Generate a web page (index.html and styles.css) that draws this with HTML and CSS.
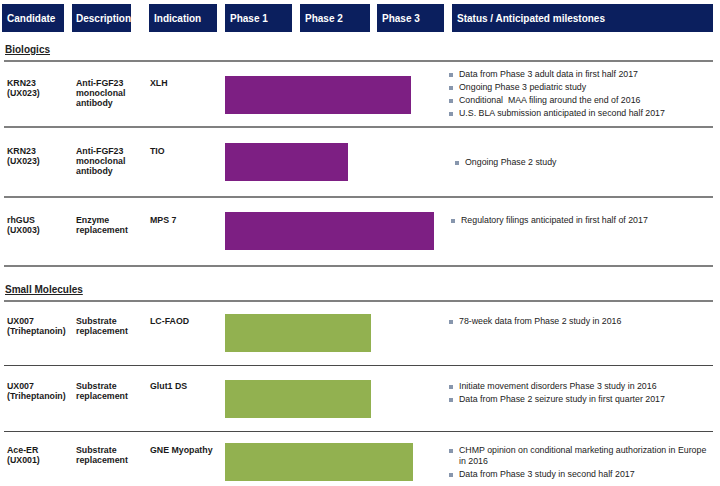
FILE: index.html
```html
<!DOCTYPE html>
<html lang="en">
<head>
<meta charset="utf-8">
<title>Pipeline</title>
<link rel="stylesheet" href="styles.css">
</head>
<body>
<div class="page">
  <div class="head">
    <div class="hc w-cand">Candidate</div>
    <div class="hc w-desc">Description</div>
    <div class="hc w-ind">Indication</div>
    <div class="hc w-p1">Phase 1</div>
    <div class="hc w-p2">Phase 2</div>
    <div class="hc w-p3">Phase 3</div>
    <div class="hc w-stat">Status / Anticipated milestones</div>
  </div>

  <div class="section s-bio"><span>Biologics</span></div>

  <div class="row r1 thick">
    <div class="cell">KRN23<br>(UX023)</div>
    <div class="cell">Anti-FGF23<br>monoclonal<br>antibody</div>
    <div class="cell">XLH</div>
    <div class="barcell"><div class="bar purple" style="width:186px"></div></div>
    <ul class="status">
      <li>Data from Phase 3 adult data in first half 2017</li>
      <li>Ongoing Phase 3 pediatric study</li>
      <li>Conditional&nbsp; MAA filing around the end of 2016</li>
      <li>U.S. BLA submission anticipated in second half 2017</li>
    </ul>
  </div>

  <div class="row r2 thick">
    <div class="cell">KRN23<br>(UX023)</div>
    <div class="cell">Anti-FGF23<br>monoclonal<br>antibody</div>
    <div class="cell">TIO</div>
    <div class="barcell"><div class="bar purple" style="width:123px"></div></div>
    <ul class="status">
      <li>Ongoing Phase 2 study</li>
    </ul>
  </div>

  <div class="row r3 thick">
    <div class="cell">rhGUS<br>(UX003)</div>
    <div class="cell">Enzyme<br>replacement</div>
    <div class="cell">MPS 7</div>
    <div class="barcell"><div class="bar purple" style="width:209px"></div></div>
    <ul class="status">
      <li>Regulatory filings anticipated in first half of 2017</li>
    </ul>
  </div>

  <div class="section s-small thick"><span>Small Molecules</span></div>

  <div class="row r4 thick">
    <div class="cell">UX007<br>(Triheptanoin)</div>
    <div class="cell">Substrate<br>replacement</div>
    <div class="cell">LC-FAOD</div>
    <div class="barcell"><div class="bar green" style="width:146px"></div></div>
    <ul class="status">
      <li>78-week data from Phase 2 study in 2016</li>
    </ul>
  </div>

  <div class="row r5 thin">
    <div class="cell">UX007<br>(Triheptanoin)</div>
    <div class="cell">Substrate<br>replacement</div>
    <div class="cell">Glut1 DS</div>
    <div class="barcell"><div class="bar green" style="width:146px"></div></div>
    <ul class="status">
      <li>Initiate movement disorders Phase 3 study in 2016</li>
      <li>Data from Phase 2 seizure study in first quarter 2017</li>
    </ul>
  </div>

  <div class="row r6 thin">
    <div class="cell">Ace-ER<br>(UX001)</div>
    <div class="cell">Substrate<br>replacement</div>
    <div class="cell">GNE Myopathy</div>
    <div class="barcell"><div class="bar green" style="width:188px"></div></div>
    <ul class="status">
      <li>CHMP opinion on conditional marketing authorization in Europe in 2016</li>
      <li>Data from Phase 3 study in second half 2017</li>
    </ul>
  </div>
</div>
</body>
</html>
```

FILE: styles.css
```css
* { box-sizing: border-box; }

html, body {
  margin: 0;
  padding: 0;
  background: #ffffff;
}

body {
  font-family: "Liberation Sans", Arial, sans-serif;
  color: #1a1a1a;
  width: 720px;
  height: 486px;
  overflow: hidden;
}

.page {
  padding-top: 4px;
}

/* Header bar */
.head {
  display: flex;
  gap: 8px;
  margin-left: 2px;
  height: 28px;
}

.hc {
  background: #0b1f5e;
  color: #ffffff;
  font-weight: bold;
  font-size: 10px;
  display: flex;
  align-items: center;
  padding-left: 5px;
  white-space: nowrap;
}

.w-cand { width: 62px; }
.w-desc { width: 59px; padding-left: 4px; }
.w-ind { width: 68px; margin-left: 10px; }
.w-p1 { width: 67px; }
.w-p2 { width: 70px; }
.w-p3 { width: 67px; margin-left: -1px; }
.w-stat { width: 261px; }

/* Section titles */
.section {
  margin-left: 4px;
  width: 709px;
  font-size: 10px;
  line-height: 12px;
  font-weight: bold;
  color: #222;
}

.section span {
  text-decoration: underline;
  margin-left: 1px;
}

.s-bio {
  height: 28px;
  padding-top: 12px;
}

.s-small {
  height: 35px;
  padding-top: 17px;
}

/* Rows */
.row {
  margin-left: 4px;
  width: 709px;
  display: grid;
  grid-template-columns: 72px 74px 75px 220px 1fr;
  align-items: start;
}

.thick { border-top: 2px solid #808080; }
.thin { border-top: 1px solid #4a4a4a; }

.cell {
  font-size: 8.8px;
  line-height: 10px;
  font-weight: bold;
  padding-top: var(--txt);
}

.row .cell:first-child { padding-left: 3px; }

.barcell {
  padding-top: var(--bar);
}

.bar {
  height: 38px;
}

.purple { background: #7d1f83; }
.green { background: #92b150; }

.status {
  list-style: none;
  margin: 0;
  padding: var(--st) 0 0 var(--sl, 4px);
  font-size: 8.8px;
  line-height: 11px;
  color: #222;
}

.status li {
  display: flex;
  margin-bottom: 2px;
}

.status li::before {
  content: "";
  flex: 0 0 4px;
  height: 4px;
  margin: 4px 6px 0 0;
  background: #8796ad;
}

.r1 { height: 66px; --bar: 14px; --txt: 16px; --st: 7px; }
.r2 { height: 70px; --bar: 15px; --txt: 18px; --st: 29px; --sl: 10px; }
.r3 { height: 69px; --bar: 14px; --txt: 17px; --st: 17px; --sl: 6px; }
.r4 { height: 65px; --bar: 12px; --txt: 14px; --st: 14px; }
.r5 { height: 66px; --bar: 14px; --txt: 15px; --st: 15px; }
.r6 { height: 60px; --bar: 11px; --txt: 13px; --st: 13px; }
```
